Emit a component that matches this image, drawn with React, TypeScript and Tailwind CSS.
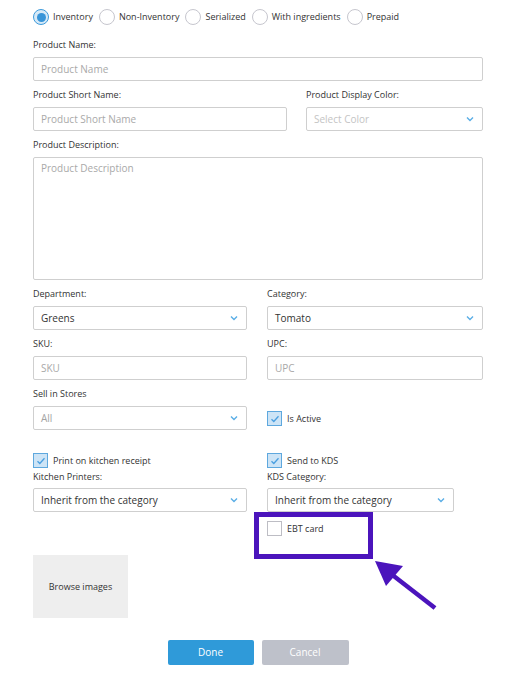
import React from "react";

const Chevron = () => (
  <svg width="8" height="6" viewBox="0 0 8 6" className="shrink-0">
    <path d="M1 1.5 L4 4.5 L7 1.5" fill="none" stroke="#5aaee6" strokeWidth="1.4" />
  </svg>
);

const Label = ({ children }: { children: React.ReactNode }) => (
  <div className="h-[14px] leading-[14px] text-[9px] text-[#333] mb-[5px] whitespace-nowrap">{children}</div>
);

const Input = ({ placeholder, h = "h-[24px]" }: { placeholder: string; h?: string }) => (
  <div className={`${h} border border-[#cfcfcf] rounded-[2px] bg-white px-[7px] text-[10px] text-[#a9a9a9] flex items-center`}>
    {placeholder}
  </div>
);

const Select = ({ value, muted, light }: { value: string; muted?: boolean; light?: boolean }) => (
  <div className="h-[24px] border border-[#cfcfcf] rounded-[2px] bg-white pl-[7px] pr-[8px] text-[10px] flex items-center justify-between">
    <span className={light ? "text-[#c4c4c4]" : muted ? "text-[#a3a3a3]" : "text-[#333]"}>{value}</span>
    <Chevron />
  </div>
);

const Check = ({ checked, label }: { checked?: boolean; label: string }) => (
  <div className="flex items-center gap-[5px] h-[15px]">
    <div
      className={
        checked
          ? "w-[15px] h-[15px] border border-[#5ea8de] bg-[#cde4f6] flex items-center justify-center"
          : "w-[15px] h-[15px] border border-[#bdbdc4] bg-white"
      }
    >
      {checked && (
        <svg width="10" height="8" viewBox="0 0 10 8">
          <path d="M1.5 4.2 L3.8 6.5 L8.5 1.2" fill="none" stroke="#4a9fe0" strokeWidth="1.3" />
        </svg>
      )}
    </div>
    <span className="text-[9px] text-[#333] whitespace-nowrap">{label}</span>
  </div>
);

const Radio = ({ checked, label }: { checked?: boolean; label: string }) => (
  <div className="flex items-center gap-[4px]">
    {checked ? (
      <div className="w-[16px] h-[16px] rounded-full border-[1.5px] border-[#3e9bdb] bg-[#d6e9f7] flex items-center justify-center">
        <div className="w-[9px] h-[9px] rounded-full bg-[#3794d8]" />
      </div>
    ) : (
      <div className="w-[16px] h-[16px] rounded-full border border-[#c6c6ce] bg-white" />
    )}
    <span className="text-[9px] text-[#333] whitespace-nowrap">{label}</span>
  </div>
);

export default function App() {
  return (
    <div className="relative w-[517px] h-[677px] bg-white font-['Open_Sans',sans-serif] text-[#333] overflow-hidden">
      <div className="ml-[33px] w-[450px] pt-[9px]">
        <div className="flex items-center gap-[6px] h-[16px]">
          <Radio checked label="Inventory" />
          <Radio label="Non-Inventory" />
          <Radio label="Serialized" />
          <Radio label="With ingredients" />
          <Radio label="Prepaid" />
        </div>

        <div className="mt-[13px]">
          <Label>Product Name:</Label>
          <Input placeholder="Product Name" />
        </div>

        <div className="mt-[7px] grid grid-cols-[254px_177px] gap-x-[19px]">
          <div>
            <Label>Product Short Name:</Label>
            <Input placeholder="Product Short Name" />
          </div>
          <div>
            <Label>Product Display Color:</Label>
            <Select value="Select Color" light />
          </div>
        </div>

        <div className="mt-[7px]">
          <Label>Product Description:</Label>
          <div className="h-[123px] border border-[#cfcfcf] rounded-[2px] bg-white px-[7px] pt-[3px] text-[10px] text-[#a9a9a9]">
            Product Description
          </div>
        </div>

        <div className="mt-[7px] grid grid-cols-[214px_216px] gap-x-[20px] gap-y-[7px]">
          <div>
            <Label>Department:</Label>
            <Select value="Greens" />
          </div>
          <div>
            <Label>Category:</Label>
            <Select value="Tomato" />
          </div>
          <div>
            <Label>SKU:</Label>
            <Input placeholder="SKU" />
          </div>
          <div>
            <Label>UPC:</Label>
            <Input placeholder="UPC" />
          </div>
          <div>
            <Label>Sell in Stores</Label>
            <Select value="All" muted />
          </div>
          <div className="flex items-end pb-[4px]">
            <Check checked label="Is Active" />
          </div>
        </div>

        <div className="mt-[23px] grid grid-cols-[214px_216px] gap-x-[20px]">
          <div>
            <Check checked label="Print on kitchen receipt" />
            <div className="mt-[2px]">
              <div className="h-[14px] leading-[14px] text-[9px] text-[#333] mb-[4px]">Kitchen Printers:</div>
              <Select value="Inherit from the category" />
            </div>
          </div>
          <div>
            <Check checked label="Send to KDS" />
            <div className="mt-[2px] w-[187px]">
              <div className="h-[14px] leading-[14px] text-[9px] text-[#333] mb-[4px]">KDS Category:</div>
              <Select value="Inherit from the category" />
            </div>
          </div>
          <div className="h-[43px]" />
          <div className="h-[43px] pt-[9px]">
            <Check label="EBT card" />
          </div>
        </div>

        <div className="w-[95px] h-[63px] bg-[#eeeeee] flex items-center justify-center text-[9px] text-[#333]">
          Browse images
        </div>

        <div className="mt-[22px] flex justify-center gap-[8px]">
          <div className="w-[86px] h-[25px] rounded-[2px] bg-[#2f9ad9] text-white text-[10px] flex items-center justify-center">
            Done
          </div>
          <div className="w-[87px] h-[25px] rounded-[2px] bg-[#bec1ca] text-white text-[10px] flex items-center justify-center">
            Cancel
          </div>
        </div>
      </div>

      <div className="absolute left-[254px] top-[512px] w-[119px] h-[47px] border-[5px] border-[#4b14bc]" />
      <svg className="absolute left-0 top-0" width="517" height="677" viewBox="0 0 517 677">
        <line x1="435" y1="608" x2="386" y2="570" stroke="#4b14bc" strokeWidth="4.5" />
        <polygon points="375,561 386,586 403,566" fill="#4b14bc" />
      </svg>
    </div>
  );
}
